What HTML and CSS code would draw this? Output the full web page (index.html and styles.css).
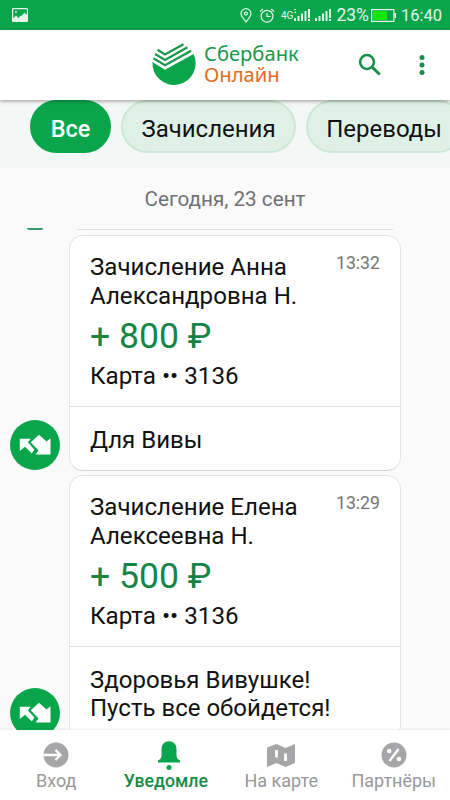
FILE: index.html
```html
<!DOCTYPE html>
<html lang="ru">
<head>
<meta charset="utf-8">
<title>Сбербанк Онлайн</title>
<link rel="stylesheet" href="styles.css">
</head>
<body>
<div class="app">
  <div class="status">
    <svg class="status-picture" width="16" height="14" viewBox="0 0 16 14"><rect x=".6" y=".6" width="14.8" height="12.8" rx=".6" fill="none" stroke="#e4f5e9" stroke-width="1.2"/><path d="M1 13V10.500L4 7.500L6.500 10L8.500 7.500L9.500 8L12.500 4.500L15 7V13Z" fill="#e4f5e9"/><circle cx="4" cy="4" r=".9" fill="#e4f5e9"/></svg>
    <div class="status-right">
      <svg class="pin" width="12" height="15" viewBox="0 0 12 15" fill="none" stroke="#e4f5e9" stroke-width="1.2"><path d="M6 14C3.500 10.500 1 8.500 1 5.600A5 5 0 0 1 11 5.600C11 8.500 8.500 10.500 6 14Z"/><circle cx="6" cy="5.600" r="1.500"/></svg>
      <svg class="alarm" width="16" height="15" viewBox="0 0 16 15" fill="none" stroke="#e4f5e9" stroke-width="1.200"><circle cx="8" cy="8.200" r="5.900"/><path d="M1 3.500L4 1M15 3.500L12 1M8 5V8.500H11.500"/></svg>
      <span class="network">4G</span>
      <svg class="signal" width="16" height="14" viewBox="0 0 16 14" fill="#e4f5e9"><path d="M0 10h2v3H0zM3.500 8h2v5h-2zM7 5.500h2V13H7zM10.500 3h2v10h-2zM14 1h2v9h-2zM14 11h2v2h-2zM0 5l1.200-2 1.200 2zM0 1h2v1H0z"/></svg>
      <svg class="signal-two" width="16" height="14" viewBox="0 0 16 14" fill="#e4f5e9"><path d="M0 10h2v3H0zM3.500 8h2v5h-2zM7 5.500h2V13H7zM10.500 3h2v10h-2zM14 1h2v9h-2zM14 11h2v2h-2z"/></svg>
      <span class="percent">23%</span>
      <svg class="battery" width="25" height="13" viewBox="0 0 25 13"><rect x=".6" y=".6" width="22.300" height="11.800" fill="none" stroke="#e4f5e9" stroke-width="1.200"/><path d="M2 2h14v9H2z" fill="#13e60c"/><path d="M23.500 4H25v5h-1.500z" fill="#e4f5e9"/></svg>
      <span class="clock">16:40</span>
    </div>
  </div>
  <header class="header">
    <div class="brand">
      <svg class="logo" width="44" height="42" viewBox="0 0 44 42"><path d="M.5 19L13 26.800L41.500 11A21.600 21.600 0 1 1 .5 19Z" fill="#08a54b"/><path d="M5.500 6.800L13 11.500L31.500 1.200M3 11L13 17L35.500 4.300M1.500 15.200L13 22.300L39.200 7.700" fill="none" stroke="#17984b" stroke-width="2.200"/></svg>
      <div class="wordmark"><span class="sber">Сбербанк</span><span class="online">Онлайн</span></div>
    </div>
    <svg class="search" width="24" height="24" viewBox="0 0 24 24" fill="none" stroke="#168e48" stroke-width="2.500"><circle cx="9" cy="9" r="6.900"/><path d="M14 14L21.700 21.500" stroke-width="3"/></svg>
    <svg class="more" width="6" height="20" viewBox="0 0 6 20" fill="#168e48"><circle cx="3" cy="2.500" r="2.500"/><circle cx="3" cy="10" r="2.500"/><circle cx="3" cy="17.500" r="2.500"/></svg>
  </header>
  <nav class="filters">
    <div class="chip chip-active"><span>Все</span></div>
    <div class="chip chip-in"><span>Зачисления</span></div>
    <div class="chip chip-out"><span>Переводы</span></div>
  </nav>
  <main class="feed">
    <div class="date"><span>Сегодня, 23 сент</span></div>
    <div class="previous"><i class="previous-avatar"></i><i class="previous-card"></i></div>
    <section class="entry">
      <div class="avatar"><svg width="34" height="22" viewBox="0 0 34 22" fill="#fff"><path d="M1.800 4.800H12.800L9.800 8.300L16.300 15.500L13.800 19.500L7 12.800L1.800 17Z"/><path d="M12.800 8.300L21 .7L28.500 7.500L32.500 4.300V20.500H17.500L20.500 16.500Z"/></svg></div>
      <article class="card">
        <div class="details">
          <div class="name"><span>Зачисление Анна</span><br><span>Александровна Н.</span></div>
          <time>13:32</time>
          <div class="amount">+ 800 ₽</div>
          <div class="account">Карта •• 3136</div>
        </div>
        <div class="note">Для Вивы</div>
      </article>
    </section>
    <section class="entry">
      <div class="avatar"><svg width="34" height="22" viewBox="0 0 34 22" fill="#fff"><path d="M1.800 4.800H12.800L9.800 8.300L16.300 15.500L13.800 19.500L7 12.800L1.800 17Z"/><path d="M12.800 8.300L21 .7L28.500 7.500L32.500 4.300V20.500H17.500L20.500 16.500Z"/></svg></div>
      <article class="card">
        <div class="details">
          <div class="name"><span>Зачисление Елена</span><br><span>Алексеевна Н.</span></div>
          <time>13:29</time>
          <div class="amount">+ 500 ₽</div>
          <div class="account">Карта •• 3136</div>
        </div>
        <div class="note note-long">Здоровья Вивушке!<br>Пусть все обойдется!</div>
      </article>
    </section>
  </main>
  <nav class="tabs">
    <div class="tab"><svg width="28" height="28" viewBox="0 0 28 28"><circle cx="14" cy="14" r="12.500" fill="#a6a6a8"/><path d="M1.500 14H18M13.500 9L18.500 14L13.500 19" fill="none" stroke="#fff" stroke-width="2.300"/></svg><span>Вход</span></div>
    <div class="tab tab-active"><svg width="28" height="28" viewBox="0 0 28 28" fill="#08a54b"><path d="M3 21.500V19.500Q6 18.500 6.500 15.500V8Q7 .2 14 .2T21.500 8V15.500Q22 18.500 25 19.500V21.500Z"/><circle cx="14" cy="26.500" r="2.500"/></svg><span>Уведомле</span></div>
    <div class="tab"><svg width="28" height="28" viewBox="0 0 28 28"><path d="M0 6.500L9.500 3L18.500 7L28 3V22L18.500 26L9.500 22L0 26Z" fill="#a6a6a8"/><path d="M9.500 9V16.500M18.500 12.500V20" stroke="#fff" stroke-width="2.800"/></svg><span>На карте</span></div>
    <div class="tab"><svg width="28" height="28" viewBox="0 0 28 28"><circle cx="14" cy="14" r="12.500" fill="#a6a6a8"/><path d="M18.500 8L9.500 20" stroke="#fff" stroke-width="2.400"/><circle cx="9.200" cy="10" r="2.300" fill="#fff"/><circle cx="19" cy="18" r="2.300" fill="#fff"/></svg><span>Партнёры</span></div>
  </nav>
</div>
</body>
</html>
```
FILE: styles.css
```css
* { box-sizing: border-box; }
body { margin: 0; font-family: Roboto, "Noto Sans", sans-serif; color: #111; }
svg { display: block; flex: none; overflow: visible; }
.app { width: 450px; height: 800px; overflow: hidden; display: flex; flex-direction: column; background: #fafafa; }
.status { height: 30px; flex: none; background: #08a54b; color: #e4f5e9; display: flex; justify-content: space-between; align-items: center; padding: 0 8px 0 12px; }
.status-right { display: flex; align-items: center; white-space: nowrap; }
.alarm { margin-left: 7px; }
.network { font-size: 10px; margin-left: 6px; margin-top: 1px; }
.signal { margin-left: 1px; }
.signal-two { margin-left: 5px; }
.percent { margin-left: 5px; font-size: 17.500px; }
.battery { margin: 0 5px 0 2px; }
.clock { font-size: 16.500px; }
.header { height: 70px; flex: none; background: #fff; display: flex; align-items: center; padding-left: 152px; position: relative; z-index: 1; box-shadow: 0 1px 4px #0006; }
.brand { width: 206px; display: flex; gap: 8px; margin-top: -2px; }
.wordmark { font-family: "Noto Sans", sans-serif; font-size: 20.200px; line-height: 20px; display: flex; flex-direction: column; gap: 1px; }
.sber { color: #17984b; }
.online { color: #e16c1e; }
.more { margin-left: 37px; }
.filters { height: 68px; flex: none; background: #f3f7f5; display: flex; gap: 10px; padding-left: 30px; }
.chip { height: 53px; flex: none; border: 2px solid #cae8d4; border-radius: 27px; background: #dff1e6; font-size: 24px; display: flex; align-items: center; justify-content: center; white-space: nowrap; padding-top: 4px; }
.chip-active { width: 81px; background: #08a54b; border-color: #08a54b; color: #fff; font-weight: 500; font-size: 23.500px; }
.chip-in { width: 175px; }
.chip-out { width: 158px; padding-right: 2px; }
.feed { flex: 1; min-height: 0; overflow: hidden; background: #fafafa; }
.date { height: 61px; display: flex; align-items: center; justify-content: center; color: #6f7175; font-size: 20.700px; }
.previous { height: 6px; display: flex; gap: 50px; padding-left: 27px; }
.previous-avatar { width: 16px; height: 2px; border-radius: 0 0 8px 8px; background: #369b6c; margin-top: -1px; }
.previous-card { width: 316px; height: 2px; margin-left: -16px; border-bottom: 1px solid #dedede; margin-top: -1px; }
.entry { display: flex; gap: 9px; padding-left: 10px; margin-bottom: 4px; align-items: flex-end; }
.avatar { width: 50px; height: 50px; flex: none; border-radius: 50%; background: #08a54b; display: flex; align-items: center; justify-content: center; margin-bottom: 1px; }
.card { width: 332px; background: #fff; border: 1px solid #e5e5e5; border-bottom-color: #d5d5d5; border-radius: 14px; }
.details { height: 171px; border-bottom: 1px solid #ddd; display: grid; grid-template-columns: 1fr auto; grid-template-rows: 64px 38px auto; padding: 17px 20px 0 20px; white-space: nowrap; }
.name { font-size: 24.100px; line-height: 29px; }
time { color: #747474; font-size: 17.700px; line-height: 20px; }
.amount { grid-column: 1 / 3; font-size: 35.600px; line-height: 38px; color: #168544; }
.account { grid-column: 1 / 3; font-size: 24.200px; line-height: 29px; margin-top: 7px; }
.note { font-size: 24px; line-height: 28.500px; padding: 19px 20px 15px; white-space: nowrap; }
.tabs { height: 70px; flex: none; background: #fff; display: grid; grid-template-columns: repeat(4, 1fr); position: relative; box-shadow: 0 -1px 2px #0001; }
.tab { display: flex; flex-direction: column; align-items: center; color: #98989a; font-size: 18px; line-height: 22px; padding-top: 11px; gap: 1px; }
.tab-active { color: #178b46; font-weight: 500; }
.tab-active span { font-size: 17.700px; margin-right: 6px; }
```
